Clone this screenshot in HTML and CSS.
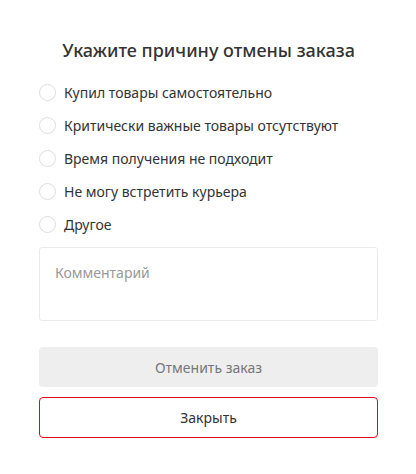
FILE: index.html
```html
<!DOCTYPE html>
<html lang="ru">
<head>
<meta charset="utf-8">
<link rel="stylesheet" href="styles.css">
</head>
<body>
<div class="modal">
  <h2 class="title">Укажите причину отмены заказа</h2>
  <div class="reasons">
    <label class="reason"><span class="radio"></span><span class="reason-text">Купил товары самостоятельно</span></label>
    <label class="reason"><span class="radio"></span><span class="reason-text">Критически важные товары отсутствуют</span></label>
    <label class="reason"><span class="radio"></span><span class="reason-text">Время получения не подходит</span></label>
    <label class="reason"><span class="radio"></span><span class="reason-text">Не могу встретить курьера</span></label>
    <label class="reason"><span class="radio"></span><span class="reason-text">Другое</span></label>
  </div>
  <div class="comment">Комментарий</div>
  <div class="btn btn-cancel">Отменить заказ</div>
  <div class="btn btn-close">Закрыть</div>
</div>
</body>
</html>
```
FILE: styles.css
```css
* { box-sizing: border-box; }
html, body { margin: 0; padding: 0; background: #fff; }
body {
  font-family: "Noto Sans", "Liberation Sans", sans-serif;
  color: #333;
  width: 416px;
  height: 474px;
}
.modal {
  padding: 38px 38px 0 39px;
  display: flex;
  flex-direction: column;
}
.title {
  margin: 0;
  font-size: 18px;
  font-weight: 500;
  line-height: 24px;
  text-align: center;
  color: #333;
}
.reasons {
  margin-top: 14px;
  display: flex;
  flex-direction: column;
}
.reason {
  height: 33px;
  display: flex;
  align-items: center;
  gap: 8px;
  font-size: 14px;
  color: #333;
}
.radio {
  width: 17px;
  height: 17px;
  border: 1px solid #ddd;
  border-radius: 50%;
  flex: none;
}
.comment {
  margin-top: 6px;
  height: 74px;
  border: 1px solid #ebebeb;
  border-radius: 3px;
  padding: 16px 15px;
  font-size: 14px;
  line-height: 18px;
  color: #999;
}
.btn {
  height: 40px;
  border-radius: 4px;
  display: flex;
  align-items: center;
  justify-content: center;
  font-size: 14px;
}
.btn-cancel {
  margin-top: 26px;
  background: #eeeeee;
  color: #777;
}
.btn-close {
  margin-top: 10px;
  height: 41px;
  border: 1px solid #e30613;
  color: #333;
}
```
